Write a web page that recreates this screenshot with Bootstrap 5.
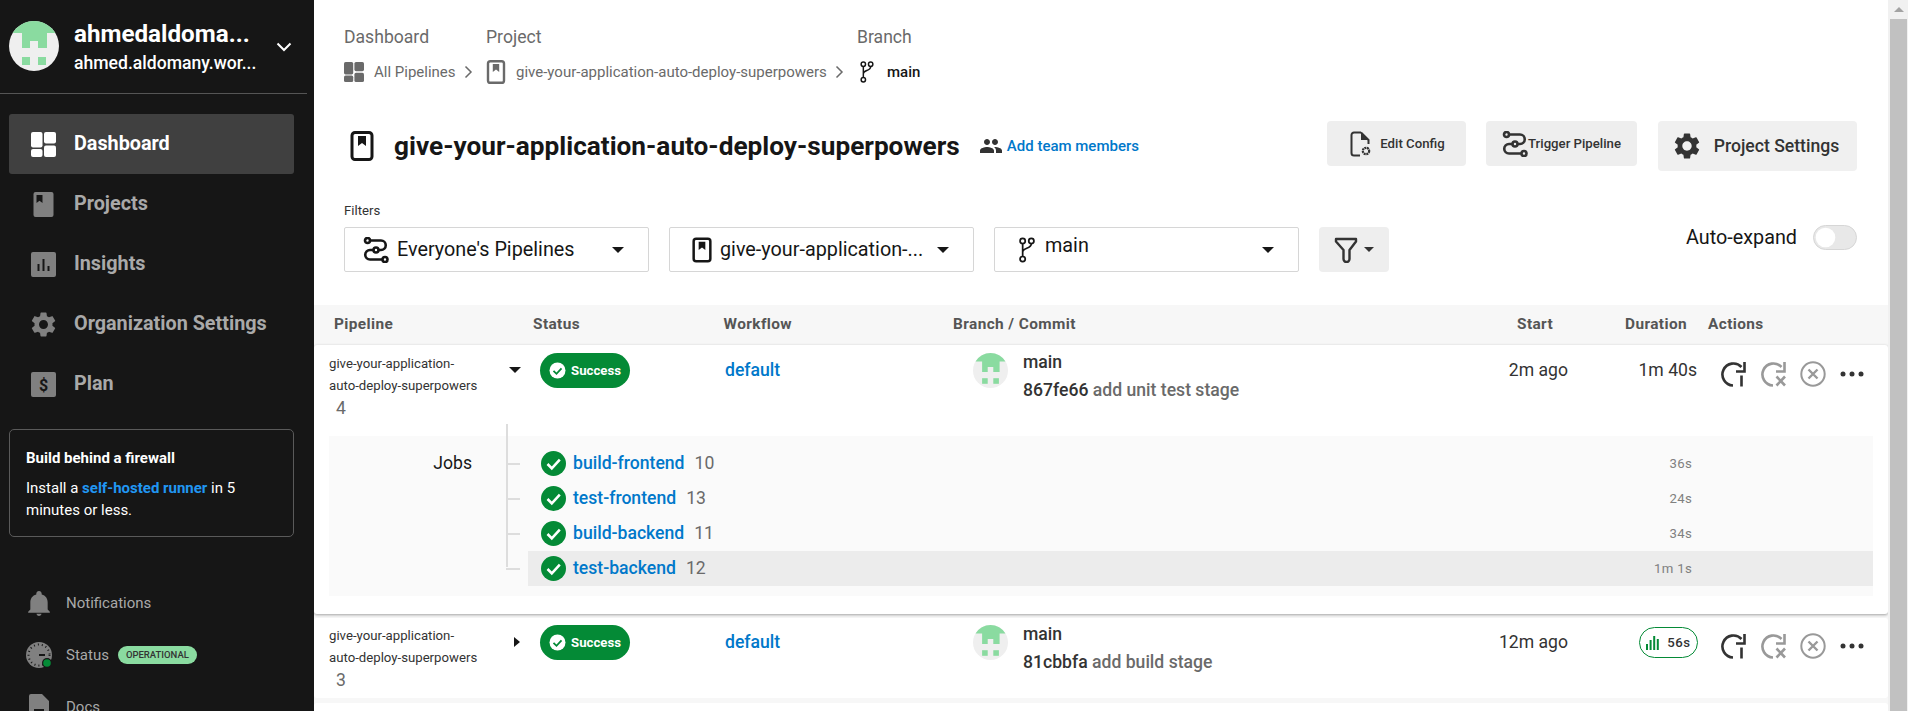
<!DOCTYPE html>
<html lang="en">
<head>
    <meta charset="UTF-8">
    <meta name="viewport" content="width=device-width, initial-scale=1.0">
    <title>give-your-application-auto-deploy-superpowers</title>
    <link href="https://cdn.jsdelivr.net/npm/bootstrap@5.3.3/dist/css/bootstrap.min.css" rel="stylesheet">
    <script src="https://cdn.jsdelivr.net/npm/bootstrap@5.3.3/dist/js/bootstrap.bundle.min.js"></script>
    <style>
        body {
            font-family: Roboto, "Liberation Sans", sans-serif;
            height: 711px;
            overflow: hidden;
            background-color: #fff;
            color: #161616;
        }
        a { text-decoration: none; color: #0078ca; }

        /* sidebar */
        .side-bar { width: 314px; height: 711px; background-color: #161616; overflow: hidden; flex-shrink: 0; }
        .side-head { height: 94px; width: 307px; padding: 21px 0 0 9px; border-bottom: 1px solid #555; }
        .side-avatar { width: 50px; height: 50px; flex-shrink: 0; }
        .side-who { width: 184px; margin-left: 15px; }
        .side-name { color: #fff; font-size: 24.2px; font-weight: 700; line-height: 26px; white-space: nowrap; }
        .side-mail { color: #fff; font-size: 17.6px; font-weight: 500; line-height: 22px; margin-top: 5px; white-space: nowrap; }
        .side-chev { margin: 21px 0 0 18px; }
        .side-nav { padding: 20px 0 0 9px; }
        .side-link { width: 285px; height: 60px; padding-left: 22px; color: #a9a9a9; font-size: 19.8px; font-weight: 700; border-radius: 3px; }
        .side-link svg { width: 25px; height: 25px; margin-right: 18px; fill: #808080; }
        .side-link.active-link { background-color: #404040; color: #fff; }
        .side-link.active-link svg { fill: #fff; }
        .fw-box { width: 285px; height: 108px; margin: 15px 0 0 9px; padding: 17px 16px; border: 1px solid #5a5a5a; border-radius: 5px; color: #fff; font-size: 15px; line-height: 22px; }
        .fw-box strong { display: block; margin-bottom: 8px; }
        .fw-box a { color: #2196f3; font-weight: 700; }
        .side-foot { padding: 40px 0 0 26px; color: #a9a9a9; font-size: 15px; }
        .foot-row { height: 52px; }
        .foot-row svg { width: 26px; height: 26px; margin-right: 14px; fill: #808080; flex-shrink: 0; }
        .op-pill { background-color: #8adba0; color: #333; font-size: 9.5px; font-weight: 500; padding: 3px 8px; margin-left: 9px; line-height: 12px; }

        /* top of the main column */
        .main-col { width: 1574px; height: 711px; overflow: hidden; flex-shrink: 0; }
        .crumb-wrap { padding: 25px 0 0 30px; }
        .crumb-col-a { width: 142px; }
        .crumb-col-b { width: 371px; }
        .crumb-label { color: #6a6a6a; font-size: 17.6px; line-height: 24px; margin-bottom: 11px; }
        .crumb-item { color: #6a6a6a; font-size: 15px; line-height: 24px; white-space: nowrap; }
        .crumb-item svg { flex-shrink: 0; }
        .crumb-icon { margin-right: 10px; }
        .crumb-main { color: #161616; font-weight: 500; }
        .title-row { height: 50px; margin-top: 37px; padding: 0 31px 0 30px; }
        .title-left { margin-left: 6px; }
        .title-left svg { flex-shrink: 0; }
        .page-title { font-size: 26.2px; font-weight: 700; line-height: 50px; margin: 0 19px 0 20px; white-space: nowrap; }
        .team-link { font-size: 15px; font-weight: 500; white-space: nowrap; }
        .act-btn { background-color: #eee; color: #333; border: 0; border-radius: 4px; font-size: 13.2px; font-weight: 500; height: 45px; padding: 0; white-space: nowrap; }
        .act-btn.edit-btn { width: 139px; margin-right: 20px; }
        .act-btn.trig-btn { width: 151px; margin-right: 21px; }
        .act-btn.proj-btn { width: 199px; height: 50px; padding-right: 2px; font-size: 17.6px; background-color: #f0f0f0; }
        .proj-gear { margin-right: 14px; }
        .filter-row { padding: 31px 31px 0 30px; }
        .filter-label { font-size: 13.2px; line-height: 18px; margin-bottom: 7px; color: #333; }
        .pick-box { width: 305px; height: 45px; margin-right: 20px; padding: 0 24px 0 18px; border: 1px solid #d6d6d6; border-radius: 2px; font-size: 19.8px; background-color: #fff; white-space: nowrap; }
        .pick-box svg { flex-shrink: 0; }
        .pick-text { margin-left: 8px; }
        .pick-raised { margin-bottom: 8px; }
        .tri-down { width: 0; height: 0; border-left: 6px solid transparent; border-right: 6px solid transparent; border-top: 6px solid #161616; flex-shrink: 0; }
        .tri-small { border-left-width: 5px; border-right-width: 5px; border-top-width: 5px; border-top-color: #333; margin-left: 6px; }
        .funnel-btn { width: 70px; height: 45px; background-color: #eee; border: 0; border-radius: 4px; padding: 0; }
        .auto-wrap { margin-top: 23px; font-size: 19.8px; height: 25px; white-space: nowrap; }
        .auto-wrap .form-check-input { width: 44px; height: 25px; margin: 0 0 0 16px; float: none; background-color: #e8e8e8; border-color: #d6d6d6; background-image: url("data:image/svg+xml,%3csvg xmlns='http://www.w3.org/2000/svg' viewBox='-4 -4 8 8'%3e%3ccircle r='3.4' fill='%23fff'/%3e%3c/svg%3e"); }

        /* pipeline table */
        .pipe-area { background-color: #f7f7f7; margin-top: 33px; }
        .head-cols { display: grid; grid-template-columns: 199px 190.5px 229.5px 564px 108px 83px 1fr; height: 40px; padding-left: 20px; align-items: center; color: #555; font-size: 15.4px; font-weight: 700; letter-spacing: .4px; white-space: nowrap; }
        .pipe-card { background-color: #fff; border-radius: 3px; }
        .pipe-card.open-card { height: 269px; box-shadow: 0 1px 3px rgba(0, 0, 0, .35); margin-bottom: 4px; }
        .pipe-card.shut-card { height: 80px; margin-bottom: 5px; }
        .pipe-cols { display: grid; grid-template-columns: 211px 185px 248px 467px 128px 129px 1fr; padding: 8px 0 0 15px; height: 91px; }
        .shut-card .pipe-cols { padding-top: 7px; }
        .pipe-name { font-size: 13.2px; line-height: 22px; color: #333; width: 175px; white-space: nowrap; }
        .pipe-num { color: #6a6a6a; font-size: 17.6px; line-height: 22px; padding-left: 7px; }
        .caret-col { width: 211px; }
        .tri-right { width: 0; height: 0; border-top: 5px solid transparent; border-bottom: 5px solid transparent; border-left: 6px solid #161616; margin: 12px 0 0 10px; }
        .caret-col .tri-down { margin: 14px 0 0 5px; }
        .ok-pill { height: 35px; width: 90px; background-color: #048a36; color: #fff; font-size: 13.2px; font-weight: 700; padding: 0; }
        .ok-pill svg { margin-right: 5px; }
        .flow-link { font-size: 17.6px; font-weight: 500; line-height: 34px; }
        .commit-wrap svg { flex-shrink: 0; margin-right: 15px; }
        .commit-lines { font-size: 17.6px; font-weight: 500; line-height: 28px; margin-top: -5px; color: #333; white-space: nowrap; }
        .commit-msg { color: #6a6a6a; }
        .time-cell { font-size: 17.6px; color: #333; line-height: 34px; text-align: right; white-space: nowrap; }
        .act-icons { padding: 8px 0 0 23px; gap: 14px; }
        .act-icons svg { flex-shrink: 0; }
        .run-pill { width: 59px; height: 31px; border: 1px solid #048a36; border-radius: 16px; font-size: 13.2px; font-weight: 500; letter-spacing: .5px; color: #333; margin: 2px -1px 0 auto; }
        .job-area { display: flex; width: 1544px; height: 160px; margin-left: 15px; padding: 10px 0; background-color: #fafafa; }
        .job-title { width: 177px; padding-right: 34px; text-align: right; font-size: 17.6px; line-height: 35px; }
        .job-list { width: 1367px; position: relative; }
        .job-list::before { content: ""; position: absolute; left: 0; top: -22px; width: 2px; height: 143px; background-color: #ddd; }
        .job-line { height: 35px; padding-left: 22px; }
        .job-tick { width: 14px; height: 2px; margin-left: -22px; margin-right: 8px; background-color: #ddd; }
        .job-body { width: 1345px; height: 35px; padding: 0 181px 0 13px; font-size: 17.6px; }
        .job-line.picked .job-body { background-color: #ececec; }
        .job-body svg { margin-right: 7px; flex-shrink: 0; }
        .job-name { font-weight: 500; }
        .job-num { color: #6a6a6a; margin-left: 10px; }
        .job-time { color: #808080; font-size: 13.2px; letter-spacing: .3px; }

        /* fake browser scrollbar */
        .fake-scroll { width: 20px; height: 711px; background-color: #f1f1f1; padding: 7px 1px 0 2px; flex-shrink: 0; }
        .scroll-arrow { width: 0; height: 0; margin: 0 auto 7px; border-left: 5px solid transparent; border-right: 5px solid transparent; border-bottom: 5px solid #a3a3a3; }
        .scroll-thumb { height: 692px; background-color: #c1c1c1; }
    </style>
</head>
<body>
    <svg width="0" height="0" class="d-none">
        <defs>
            <symbol id="ic-gear" viewBox="2 2 20 20"><path d="M19.14 12.94c.04-.3.06-.61.06-.94 0-.32-.02-.64-.07-.94l2.03-1.58a.49.49 0 0 0 .12-.61l-1.92-3.32a.488.488 0 0 0-.59-.22l-2.39.96c-.5-.38-1.03-.7-1.62-.94l-.36-2.54a.484.484 0 0 0-.48-.41h-3.84c-.24 0-.43.17-.47.41l-.36 2.54c-.59.24-1.13.57-1.62.94l-2.39-.96c-.22-.08-.47 0-.59.22L2.74 8.87c-.12.21-.08.47.12.61l2.03 1.58c-.05.3-.09.63-.09.94s.02.64.07.94l-2.03 1.58a.49.49 0 0 0-.12.61l1.92 3.32c.12.22.37.29.59.22l2.39-.96c.5.38 1.03.7 1.62.94l.36 2.54c.05.24.24.41.48.41h3.84c.24 0 .44-.17.47-.41l.36-2.54c.59-.24 1.13-.56 1.62-.94l2.39.96c.22.08.47 0 .59-.22l1.92-3.32c.12-.22.07-.47-.12-.61l-2.01-1.58zM12 15.6c-1.98 0-3.6-1.62-3.6-3.6s1.62-3.6 3.6-3.6 3.6 1.62 3.6 3.6-1.62 3.6-3.6 3.6z"/></symbol>
            <symbol id="ic-dash" viewBox="0 0 25 25"><rect width="11.5" height="15.5" rx="2"/><rect x="13" width="12" height="11.5" rx="2"/><rect y="17" width="11.5" height="8" rx="2"/><rect x="13" y="13.5" width="12" height="11.5" rx="2"/></symbol>
            <symbol id="ic-book" viewBox="0 0 25 25"><path fill-rule="evenodd" d="M4.5 0h16A2 2 0 0 1 22.5 2v21a2 2 0 0 1-2 2h-16a2 2 0 0 1-2-2V2a2 2 0 0 1 2-2zM5.5 3v8l3-2.2 3 2.2V3z"/></symbol>
            <symbol id="ic-insight" viewBox="0 0 25 25"><path fill-rule="evenodd" d="M2 0h21a2 2 0 0 1 2 2v21a2 2 0 0 1-2 2H2a2 2 0 0 1-2-2V2a2 2 0 0 1 2-2zM6.5 12v7h2v-7zM11.5 7v12h2V7zM16.5 14v5h2v-5z"/></symbol>
            <symbol id="ic-plan" viewBox="0 0 25 25"><rect width="25" height="25" rx="2"/><text x="12.5" y="18.5" text-anchor="middle" font-size="16" font-weight="700" font-family="Roboto, sans-serif" fill="#161616">$</text></symbol>
            <symbol id="ic-bell" viewBox="2 2 24 24"><path d="M14 26c1.3 0 2.3-.9 2.3-2h-4.6c0 1.1 1 2 2.3 2zm8-6v-6.5c0-3.5-1.9-6.5-5.5-7.3V5.5C16.5 4.100 15.400 3 14 3s-2.5 1.100-2.5 2.5v.7C8 7 6 10 6 13.5V20l-2 2v1h20v-1z"/></symbol>
            <symbol id="ic-doc" viewBox="0 0 26 26"><path fill-rule="evenodd" d="M5 0h11l7 7v17a2 2 0 0 1-2 2H5a2 2 0 0 1-2-2V2a2 2 0 0 1 2-2zM8 15v2.5h10V15z"/></symbol>
            <symbol id="ic-project" viewBox="0 0 24 30"><rect x="2" y="1.5" width="20" height="27" rx="3" fill="none" stroke="currentColor" stroke-width="3"/><path fill="currentColor" d="M8 5h8v10l-4-3-4 3z"/></symbol>
            <symbol id="ic-branch" viewBox="0 0 20 30"><g fill="none" stroke="currentColor" stroke-width="2"><circle cx="5" cy="4.5" r="3"/><circle cx="15" cy="4.5" r="3"/><circle cx="5" cy="25.5" r="3"/><path d="M5 7.5v15M15 7.5c0 7-10 4-10 10"/></g></symbol>
            <symbol id="ic-flow" viewBox="0 0 26 26"><g fill="none" stroke="currentColor" stroke-width="2.6"><circle cx="4.5" cy="3.5" r="2.5"/><circle cx="13" cy="13" r="2.5"/><circle cx="22" cy="22.5" r="2.5"/><path d="M7 3.5h11a4.7 4.7 0 0 1 0 9.5h-2.5M10.5 13H7a4.7 4.7 0 0 0 0 9.5h12.5"/></g></symbol>
            <symbol id="ic-check" viewBox="0 0 25 25"><circle cx="12.5" cy="12.5" r="12.5" fill="#048a36"/><path d="M6.5 13l4.3 4.3 8-8.6" fill="none" stroke="#fff" stroke-width="2.6"/></symbol>
            <symbol id="ic-rerun" viewBox="0 0 26 26"><g fill="none" stroke="currentColor" stroke-width="2.6"><path d="M21.5 6A11 11 0 1 0 13 24.5"/><path d="M24.5 1v9.5h-8.5"/><path d="M21.5 14.5V25.5"/></g></symbol>
            <symbol id="ic-rerun-x" viewBox="0 0 26 26"><g fill="none" stroke="currentColor" stroke-width="2.6"><path d="M21.5 6A11 11 0 1 0 13 24.5"/><path d="M24.5 1v9.5h-8.5"/><path d="M16.5 15.5l8.5 9M25 15.5l-8.5 9"/></g></symbol>
            <symbol id="ic-cancel" viewBox="0 0 26 26"><g fill="none" stroke="currentColor" stroke-width="2"><circle cx="13" cy="13" r="11.7"/><path d="M8.5 8.5l9 9M17.5 8.5l-9 9" stroke-width="2.4"/></g></symbol>
            <symbol id="ic-avatar" viewBox="0 0 50 50"><circle cx="25" cy="25" r="25" fill="#efefef"/><g fill="#8adba0"><path d="M3.65 12A25 25 0 0 1 46.35 12H38V27H29V20H21V27H13V12z"/><rect x="13" y="36" width="8" height="8"/><rect x="29" y="36" width="8" height="8"/></g></symbol>
        </defs>
    </svg>

    <div class="d-flex">
        <aside class="side-bar">
            <div class="side-head d-flex">
                <svg class="side-avatar"><use href="#ic-avatar"/></svg>
                <div class="side-who">
                    <div class="side-name">ahmedaldoma...</div>
                    <div class="side-mail">ahmed.aldomany.wor...</div>
                </div>
                <svg class="side-chev" width="16" height="10" viewBox="0 0 16 10"><path d="M1.5 1.5L8 8l6.5-6.5" fill="none" stroke="#fff" stroke-width="2"/></svg>
            </div>
            <nav class="side-nav">
                <a class="side-link active-link d-flex align-items-center" href="#"><svg><use href="#ic-dash"/></svg>Dashboard</a>
                <a class="side-link d-flex align-items-center" href="#"><svg><use href="#ic-book"/></svg>Projects</a>
                <a class="side-link d-flex align-items-center" href="#"><svg><use href="#ic-insight"/></svg>Insights</a>
                <a class="side-link d-flex align-items-center" href="#"><svg><use href="#ic-gear"/></svg>Organization Settings</a>
                <a class="side-link d-flex align-items-center" href="#"><svg><use href="#ic-plan"/></svg>Plan</a>
            </nav>
            <div class="fw-box">
                <strong>Build behind a firewall</strong>
                Install a <a href="#">self-hosted runner</a> in 5 minutes or less.
            </div>
            <div class="side-foot">
                <div class="foot-row d-flex align-items-center"><svg><use href="#ic-bell"/></svg>Notifications</div>
                <div class="foot-row d-flex align-items-center">
                    <svg viewBox="0 0 26 26"><circle cx="13" cy="13" r="13"/><circle cx="13" cy="13" r="10.5" fill="none" stroke="#161616" stroke-width="2" stroke-dasharray="1 3"/><path d="M13 13h6" stroke="#161616" stroke-width="2"/><circle cx="21" cy="21" r="5" fill="#161616"/><circle cx="21" cy="21" r="3.8" fill="#048a36"/></svg>
                    Status <span class="badge rounded-pill op-pill">OPERATIONAL</span>
                </div>
                <div class="foot-row d-flex align-items-center"><svg><use href="#ic-doc"/></svg>Docs</div>
            </div>
        </aside>

        <main class="main-col">
            <div class="crumb-wrap d-flex">
                <div class="crumb-col-a">
                    <div class="crumb-label">Dashboard</div>
                    <div class="crumb-item d-flex align-items-center">
                        <svg class="crumb-icon" width="20" height="20" fill="#6a6a6a"><use href="#ic-dash"/></svg>All Pipelines
                        <svg class="ms-2" width="9" height="14" viewBox="0 0 9 14"><path d="M1.5 1.5L7 7l-5.5 5.5" fill="none" stroke="#6a6a6a" stroke-width="1.5"/></svg>
                    </div>
                </div>
                <div class="crumb-col-b">
                    <div class="crumb-label">Project</div>
                    <div class="crumb-item d-flex align-items-center">
                        <svg class="crumb-icon" width="20" height="24"><use href="#ic-project"/></svg>give-your-application-auto-deploy-superpowers
                        <svg class="ms-2" width="9" height="14" viewBox="0 0 9 14"><path d="M1.5 1.5L7 7l-5.5 5.5" fill="none" stroke="#6a6a6a" stroke-width="1.5"/></svg>
                    </div>
                </div>
                <div>
                    <div class="crumb-label">Branch</div>
                    <div class="crumb-item crumb-main d-flex align-items-center">
                        <svg class="crumb-icon" width="20" height="22"><use href="#ic-branch"/></svg>main
                    </div>
                </div>
            </div>

            <div class="title-row d-flex align-items-start">
                <div class="title-left d-flex align-items-center">
                    <svg width="24" height="30"><use href="#ic-project"/></svg>
                    <h1 class="page-title">give-your-application-auto-deploy-superpowers</h1>
                    <svg class="me-1" width="24" height="24" viewBox="0 0 24 24" fill="#333"><path d="M16 11c1.66 0 2.99-1.34 2.99-3S17.66 5 16 5c-1.66 0-3 1.34-3 3s1.34 3 3 3zm-8 0c1.66 0 2.99-1.34 2.99-3S9.66 5 8 5C6.34 5 5 6.34 5 8s1.34 3 3 3zm0 2c-2.33 0-7 1.17-7 3.5V19h14v-2.5c0-2.33-4.67-3.5-7-3.5zm8 0c-.29 0-.62.02-.97.05 1.16.84 1.97 1.97 1.97 3.45V19h6v-2.5c0-2.33-4.67-3.5-7-3.5z"/></svg>
                    <a class="team-link" href="#">Add team members</a>
                </div>
                <div class="d-flex align-items-start ms-auto">
                    <button class="btn act-btn edit-btn d-flex align-items-center justify-content-center">
                        <svg class="me-2" width="24" height="26" viewBox="0 0 24 26"><path d="M13 1.5H6a2.5 2.5 0 0 0-2.5 2.5v18A2.5 2.5 0 0 0 6 24.5h6M13 1.5L20.5 9v4" fill="none" stroke="#333" stroke-width="2"/><path d="M13 1.5V9h7.5z" fill="#333"/><circle cx="18" cy="20" r="3.2" fill="none" stroke="#333" stroke-width="2.2" stroke-dasharray="2 .6"/></svg>
                        Edit Config
                    </button>
                    <button class="btn act-btn trig-btn d-flex align-items-center justify-content-center">
                        <svg width="26" height="26" style="color:#333"><use href="#ic-flow"/></svg>
                        Trigger Pipeline
                    </button>
                    <button class="btn act-btn proj-btn d-flex align-items-center justify-content-center">
                        <svg class="proj-gear" width="26" height="26" fill="#333"><use href="#ic-gear"/></svg>
                        Project Settings
                    </button>
                </div>
            </div>

            <div class="filter-row d-flex justify-content-between">
                <div>
                    <div class="filter-label">Filters</div>
                    <div class="d-flex">
                        <div class="pick-box d-flex align-items-center">
                            <svg width="26" height="26" style="color:#161616"><use href="#ic-flow"/></svg>
                            <span class="pick-text">Everyone's Pipelines</span>
                            <span class="tri-down ms-auto"></span>
                        </div>
                        <div class="pick-box d-flex align-items-center">
                            <svg class="ms-1" width="20" height="26" style="color:#161616"><use href="#ic-project"/></svg>
                            <span class="pick-text">give-your-application-...</span>
                            <span class="tri-down ms-auto"></span>
                        </div>
                        <div class="pick-box d-flex align-items-center">
                            <svg class="ms-1" width="20" height="26" style="color:#161616"><use href="#ic-branch"/></svg>
                            <span class="pick-text pick-raised">main</span>
                            <span class="tri-down ms-auto"></span>
                        </div>
                        <button class="btn funnel-btn d-flex align-items-center justify-content-center">
                            <svg width="24" height="26" viewBox="0 0 24 26"><path d="M2 2h20v2.5L15.5 13v9a3 3 0 0 1-6 0v-9L2 4.5z" fill="none" stroke="#333" stroke-width="2.4" stroke-linejoin="round"/></svg>
                            <span class="tri-down tri-small"></span>
                        </button>
                    </div>
                </div>
                <div class="auto-wrap d-flex align-items-center">
                    Auto-expand
                    <div class="form-check form-switch p-0 m-0 d-flex"><input class="form-check-input" type="checkbox" role="switch" aria-label="Auto-expand"></div>
                </div>
            </div>

            <div class="pipe-area">
                <div class="head-cols">
                    <span>Pipeline</span><span>Status</span><span>Workflow</span><span>Branch / Commit</span><span>Start</span><span>Duration</span><span>Actions</span>
                </div>

                <div class="pipe-card open-card">
                    <div class="pipe-cols">
                        <div class="caret-col d-flex">
                            <div>
                                <div class="pipe-name">give-your-application-<br>auto-deploy-superpowers</div>
                                <div class="pipe-num">4</div>
                            </div>
                            <span class="tri-down"></span>
                        </div>
                        <div><span class="badge rounded-pill ok-pill d-flex align-items-center justify-content-center"><svg width="17" height="17" viewBox="0 0 17 17"><circle cx="8.5" cy="8.5" r="8" fill="#fff"/><path d="M4.5 8.8l3 3 5-5.5" fill="none" stroke="#048a36" stroke-width="1.8"/></svg>Success</span></div>
                        <div><a class="flow-link" href="#">default</a></div>
                        <div class="commit-wrap d-flex">
                            <svg width="35" height="35"><use href="#ic-avatar"/></svg>
                            <div class="commit-lines">main<br>867fe66 <span class="commit-msg">add unit test stage</span></div>
                        </div>
                        <div class="time-cell">2m ago</div>
                        <div class="time-cell">1m 40s</div>
                        <div class="act-icons d-flex">
                            <svg width="26" height="26" style="color:#333"><use href="#ic-rerun"/></svg>
                            <svg width="26" height="26" style="color:#999"><use href="#ic-rerun-x"/></svg>
                            <svg width="26" height="26" style="color:#999"><use href="#ic-cancel"/></svg>
                            <svg class="mt-1" width="24" height="18" viewBox="0 0 24 18" fill="#333"><circle cx="3" cy="9" r="2.5"/><circle cx="12" cy="9" r="2.5"/><circle cx="21" cy="9" r="2.5"/></svg>
                        </div>
                    </div>
                    <div class="job-area">
                        <div class="job-title">Jobs</div>
                        <div class="job-list">
                            <div class="job-line d-flex align-items-center"><span class="job-tick"></span><div class="job-body d-flex align-items-center"><svg width="25" height="25"><use href="#ic-check"/></svg><a class="job-name" href="#">build-frontend</a><span class="job-num">10</span><span class="job-time ms-auto">36s</span></div></div>
                            <div class="job-line d-flex align-items-center"><span class="job-tick"></span><div class="job-body d-flex align-items-center"><svg width="25" height="25"><use href="#ic-check"/></svg><a class="job-name" href="#">test-frontend</a><span class="job-num">13</span><span class="job-time ms-auto">24s</span></div></div>
                            <div class="job-line d-flex align-items-center"><span class="job-tick"></span><div class="job-body d-flex align-items-center"><svg width="25" height="25"><use href="#ic-check"/></svg><a class="job-name" href="#">build-backend</a><span class="job-num">11</span><span class="job-time ms-auto">34s</span></div></div>
                            <div class="job-line picked d-flex align-items-center"><span class="job-tick"></span><div class="job-body d-flex align-items-center"><svg width="25" height="25"><use href="#ic-check"/></svg><a class="job-name" href="#">test-backend</a><span class="job-num">12</span><span class="job-time ms-auto">1m 1s</span></div></div>
                        </div>
                    </div>
                </div>

                <div class="pipe-card shut-card">
                    <div class="pipe-cols">
                        <div class="caret-col d-flex">
                            <div>
                                <div class="pipe-name">give-your-application-<br>auto-deploy-superpowers</div>
                                <div class="pipe-num">3</div>
                            </div>
                            <span class="tri-right"></span>
                        </div>
                        <div><span class="badge rounded-pill ok-pill d-flex align-items-center justify-content-center"><svg width="17" height="17" viewBox="0 0 17 17"><circle cx="8.5" cy="8.5" r="8" fill="#fff"/><path d="M4.5 8.8l3 3 5-5.5" fill="none" stroke="#048a36" stroke-width="1.8"/></svg>Success</span></div>
                        <div><a class="flow-link" href="#">default</a></div>
                        <div class="commit-wrap d-flex">
                            <svg width="35" height="35"><use href="#ic-avatar"/></svg>
                            <div class="commit-lines">main<br>81cbbfa <span class="commit-msg">add build stage</span></div>
                        </div>
                        <div class="time-cell">12m ago</div>
                        <div>
                            <div class="run-pill d-flex align-items-center justify-content-center">
                                <svg class="me-2" width="13" height="14" viewBox="0 0 13 14" fill="#048a36"><rect y="8" width="2" height="6"/><rect x="3.6" y="4" width="2" height="10"/><rect x="7.2" y="0" width="2" height="14"/><rect x="10.8" y="3" width="2" height="11"/></svg>56s
                            </div>
                        </div>
                        <div class="act-icons d-flex">
                            <svg width="26" height="26" style="color:#333"><use href="#ic-rerun"/></svg>
                            <svg width="26" height="26" style="color:#999"><use href="#ic-rerun-x"/></svg>
                            <svg width="26" height="26" style="color:#999"><use href="#ic-cancel"/></svg>
                            <svg class="mt-1" width="24" height="18" viewBox="0 0 24 18" fill="#333"><circle cx="3" cy="9" r="2.5"/><circle cx="12" cy="9" r="2.5"/><circle cx="21" cy="9" r="2.5"/></svg>
                        </div>
                    </div>
                </div>

                <div class="pipe-card shut-card"></div>
            </div>
        </main>

        <div class="fake-scroll">
            <div class="scroll-arrow"></div>
            <div class="scroll-thumb"></div>
        </div>
    </div>
</body>
</html>
